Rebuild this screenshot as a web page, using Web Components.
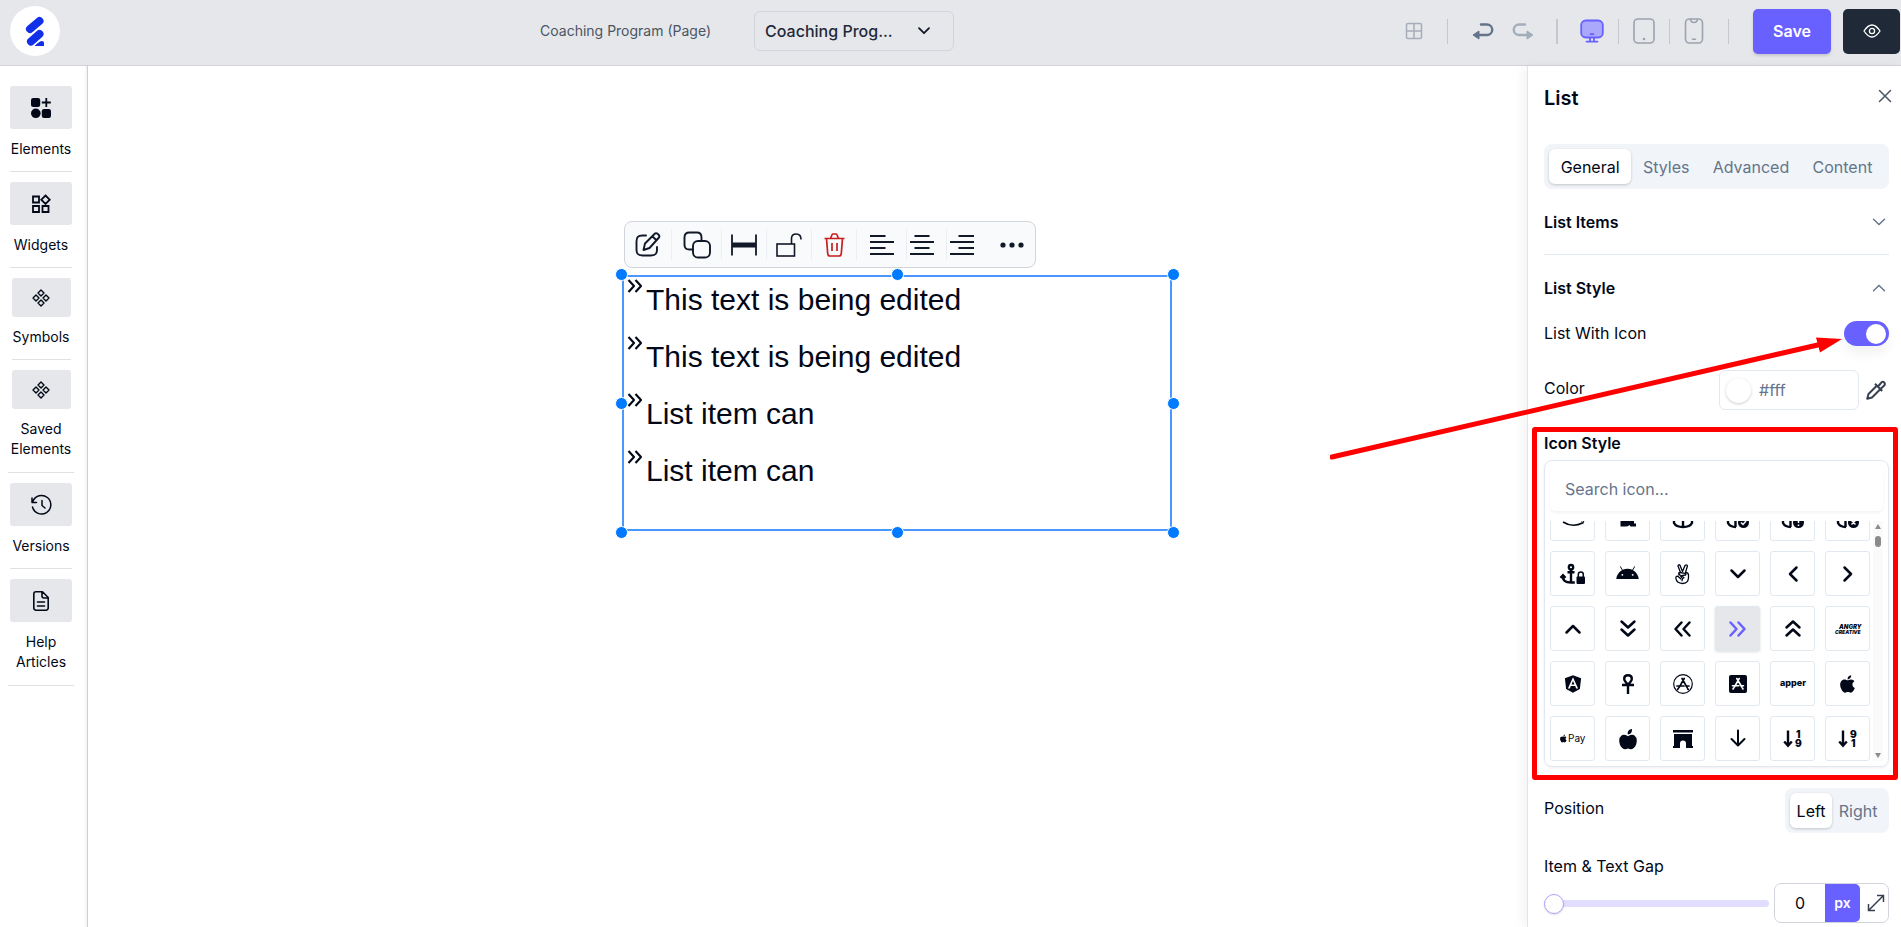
<!DOCTYPE html>
<html lang="en">
<head>
<meta charset="utf-8">
<title>Page editor</title>
<style>
  html, body { margin: 0; background: #fff; }
  body { font: 16px/24px Inter, "Liberation Sans", sans-serif; color: #020817; }
</style>
</head>
<body>
<editor-app></editor-app>
<script>
/* name: [width, height, viewBox, markup] */
const ICONS = {
  logo: [20, 31, '0 0 20 31', '<g fill="none" stroke="#1130e8" stroke-width="8" stroke-linecap="round"><path d="M5 13 14.500 5M6 25.500 14.500 18"/></g><path d="M9.500 30q5-5 7.500-5 2 0 2 2v3z" fill="#1130e8"/>'],
  frame: [18, 18, '0 0 18 18', '<g fill="none" stroke="#a7adb7" stroke-width="1.500"><rect x="1.500" y="1.500" width="15" height="15" rx="1.500"/><path d="M9 1.500v15M1.500 9h15"/></g>'],
  undo: [22, 18, '0 0 22 18', '<path d="M9 2.500h6a4.800 4.800 0 0 1 0 10.500H6" fill="none" stroke="#64748b" stroke-width="2.400" stroke-linecap="round"/><path d="M7 9v8L1 13z" fill="#64748b" stroke="#64748b" stroke-linejoin="round"/>'],
  redo: [22, 18, '0 0 22 18', '<path d="M13 2.500H7A4.800 4.800 0 0 0 7 13h9" fill="none" stroke="#a3adba" stroke-width="2.400" stroke-linecap="round"/><path d="M15 9v8l6-4z" fill="#a3adba" stroke="#a3adba" stroke-linejoin="round"/>'],
  desktop: [24, 24, '0 0 24 24', '<rect x="1.200" y="1.500" width="21.600" height="17" rx="4.500" fill="#aaa8fb" stroke="#6860ff" stroke-width="1.800"/><path d="M10.500 15.200h3M10 19v3.500M14 19v3.500M6.500 22.600h11" fill="none" stroke="#6860ff" stroke-width="1.800" stroke-linecap="round"/>'],
  tablet: [22, 26, '0 0 22 26', '<rect x="1" y="1" width="20" height="24" rx="4" fill="none" stroke="#9ca3af" stroke-width="1.600"/><circle cx="11" cy="21" r="1.300" fill="#9ca3af"/>'],
  phone: [20, 26, '0 0 20 26', '<rect x="1.500" y="1" width="17" height="24" rx="4" fill="none" stroke="#9ca3af" stroke-width="1.600"/><path d="M6.500 1.500c.5 4 6.500 4 7 0M8.500 21.200h3" fill="none" stroke="#9ca3af" stroke-width="1.600" stroke-linecap="round"/>'],
  eye: [18, 14, '0 0 18 14', '<path d="M1 7q8-12 16 0-8 12-16 0z" fill="none" stroke="#fff" stroke-width="1.300"/><circle cx="9" cy="7" r="2.600" fill="none" stroke="#fff" stroke-width="1.300"/>'],
  down: [12, 8, '0 0 12 8', '<path d="M1 1.200l5 5 5-5" fill="none" stroke="currentColor" stroke-width="1.800" stroke-linecap="round" stroke-linejoin="round"/>'],
  fold: [14, 8, '0 0 14 8', '<path d="M1.500 1.200 7 6.500l5.500-5.300" fill="none" stroke="currentColor" stroke-width="1.400" stroke-linecap="round"/>'],
  unfold: [14, 8, '0 0 14 8', '<path d="M1.500 6.800 7 1.500l5.500 5.300" fill="none" stroke="currentColor" stroke-width="1.400" stroke-linecap="round"/>'],
  close: [14, 14, '0 0 14 14', '<path d="M1.500 1.500l11 11m0-11-11 11" stroke="#4b5563" stroke-width="1.500" stroke-linecap="round"/>'],
  elements: [20, 20, '0 0 20 20', '<rect width="9.200" height="9" rx="2.200"/><rect x="10.800" y="11" width="9.200" height="9" rx="2.200"/><circle cx="4.800" cy="15.300" r="4.800"/><path d="M15.300 0v9M10.800 4.500h9" stroke="currentColor" stroke-width="1.800"/>'],
  widgets: [18, 18, '0 0 18 18', '<g fill="none" stroke="currentColor" stroke-width="1.800"><path d="M1 1.500h6v6H1zM1 11h6v6H1zM10.500 11h6v6h-6zM13.500.5l4.200 4.200-4.200 4.200-4.200-4.200z"/></g>'],
  symbols: [18, 18, '0 0 18 18', '<g fill="none" stroke="currentColor" stroke-width="1.400" stroke-linejoin="round"><path d="M9 1l3 3-3 3-3-3zM9 11l3 3-3 3-3-3zM4 6l3 3-3 3-3-3zM14 6l3 3-3 3-3-3z"/></g>'],
  history: [21, 20, '0 0 21 20', '<g fill="none" stroke="currentColor" stroke-width="1.500" stroke-linecap="round" stroke-linejoin="round"><path d="M1.800 6.500A9.300 9.300 0 1 1 1.500 12M1 3v4.500h4.500M11 5.500v5l3 2.500"/></g>'],
  doc: [16, 20, '0 0 16 20', '<g fill="none" stroke="currentColor" stroke-width="1.600" stroke-linejoin="round" stroke-linecap="round"><path d="M9.500.8H3A2.200 2.200 0 0 0 .8 3v14A2.200 2.200 0 0 0 3 19.200h10a2.200 2.200 0 0 0 2.200-2.200V6.500zM9 1v4a2 2 0 0 0 2 2h4M4.500 11h7M4.500 15h7"/></g>'],
  edit: [26, 25, '0 0 26 25', '<g fill="none" stroke="#111827" stroke-width="1.900" stroke-linecap="round" stroke-linejoin="round"><path d="M11 3.500H7.500C3 3.500 1.500 5 1.500 9.500v8c0 4.500 1.500 6 6 6H16c4.500 0 6-1.500 6-6V15"/><path d="M20 1.500c1.500-1.200 5.500 2 4 4L14.500 16 8.500 18l1.500-6.500zM17.500 4.500l4 3.800"/></g>'],
  copy: [28, 28, '0 0 28 28', '<g fill="none" stroke="#111827" stroke-width="1.900"><path d="M10 18.500H6.500Q1.500 18.500 1.500 14V6.500Q1.500 1.500 6.500 1.500H14Q18.500 1.500 18.500 6.500V9.500"/><rect x="10" y="10" width="17" height="16.500" rx="5"/></g>'],
  width: [26, 22, '0 0 26 22', '<path d="M1 .500v21M25 .500v21" stroke="#111827" stroke-width="1.800"/><path d="M1 11h24" stroke="#111827" stroke-width="5"/>'],
  unlock: [26, 24, '0 0 26 24', '<g fill="none" stroke="#111827" stroke-width="1.600"><rect x="1" y="11" width="17.500" height="12"/><path d="M15.500 11V5.500q0-4.500 4.800-4.500 4.700 0 4.700 5.500"/></g>'],
  trash: [21, 24, '0 0 21 24', '<g fill="none" stroke="#c81e1e" stroke-width="1.700" stroke-linejoin="round"><path d="M.500 5.500h20M2.500 5.500l1.200 15q.3 2.500 2.300 2.500h9q2 0 2.300-2.500l1.200-15M6.500 5.500 8 1.800q.3-.8 1-.8h3q.7 0 1 .8l1.500 3.700M8 10v8M13 10v8"/></g>'],
  alignleft: [24, 22, '0 0 24 22', '<path d="M0 2h15.500M0 8h24M0 14h15.500M0 20h24" stroke="#111827" stroke-width="2"/>'],
  aligncenter: [24, 22, '0 0 24 22', '<path d="M4.500 2h15M0 8h24M4.500 14h15M0 20h24" stroke="#111827" stroke-width="2"/>'],
  alignright: [24, 22, '0 0 24 22', '<path d="M8.500 2H24M0 8h24M8.500 14H24M0 20h24" stroke="#111827" stroke-width="2"/>'],
  dots: [24, 6, '0 0 24 6', '<g fill="#111827"><circle cx="3" cy="3" r="2.600"/><circle cx="12" cy="3" r="2.600"/><circle cx="21" cy="3" r="2.600"/></g>'],
  bullet: [16, 14, '0 0 16 14', '<path d="M1.500 1l5.500 6-5.500 6M8.500 1l5.500 6-5.500 6" fill="none" stroke="currentColor" stroke-width="2.100" stroke-linejoin="round"/>'],
  dropper: [20, 20, '0 0 20 20', '<g fill="none" stroke="#374151" stroke-width="2" stroke-linejoin="round"><path d="M11 5.500 2.500 14l-1.300 4.800L6 17.500 14.500 9M9 3.800l7.200 7.200M12 6.500l3-3.500c2-3 5.500.5 3 2.800l-3.500 3.200"/></g>'],
  expand: [18, 18, '0 0 18 18', '<path d="M2 16 16 2M10 1.500h6.500V8M1.500 10v6.500H8" fill="none" stroke="#374151" stroke-width="1.500"/>'],
  /* picker glyphs */
  amazonpay: [24, 20, '0 0 24 20', '<path d="M2 13q9.500 6 20 .800" fill="none" stroke="currentColor" stroke-width="1.600"/><path d="M20 12l3-.3-1.200 3" fill="none" stroke="currentColor"/><path d="M7 2v7h6V3"  fill="none" stroke="currentColor"/>'],
  amilia: [18, 20, '0 0 18 20', '<path d="M1.500 17.500V12q0-3 3-3h5V6H3V3h8q4 0 4 4v7.500h2v3h-5.500L10.500 16q-1.500 1.500-4 1.500z"/>'],
  anchor: [22, 20, '0 0 22 20', '<circle cx="11" cy="3" r="2" fill="none" stroke="currentColor" stroke-width="2"/><path d="M11 5v13M7 8h8M2 11.500v2.500q2 4 9 4t9-4v-2.500" fill="none" stroke="currentColor" stroke-width="2.400"/>'],
  anchorcheck: [25, 20, '0 0 25 20', '<path d="M10.500 5v13M7 8h7M3 10.500V14q2 4 8 4" fill="none" stroke="currentColor" stroke-width="2.400"/><circle cx="18.500" cy="13.500" r="5.500"/><path d="M16 13.500l2 2 3-3.500" fill="none" stroke="#fff" stroke-width="1.400"/>'],
  anchoralert: [25, 20, '0 0 25 20', '<path d="M10.500 5v13M7 8h7M3 10.500V14q2 4 8 4" fill="none" stroke="currentColor" stroke-width="2.400"/><circle cx="18.500" cy="13.500" r="5.500"/><path d="M18.500 10v4M18.500 15.500V17" stroke="#fff" stroke-width="1.500"/>'],
  anchorx: [25, 20, '0 0 25 20', '<path d="M10.500 5v13M7 8h7M3 10.500V14q2 4 8 4" fill="none" stroke="currentColor" stroke-width="2.400"/><circle cx="18.500" cy="13.500" r="5.500"/><path d="M16.500 11.500l4 4m0-4-4 4" stroke="#fff" stroke-width="1.400"/>'],
  anchorlock: [25, 20, '0 0 25 20', '<circle cx="11" cy="3.200" r="2.200" fill="none" stroke="currentColor" stroke-width="2.300"/><path d="M11 5v13.500M7.500 8.200h7M2.800 12.500q.2 6 8 6h4M.500 13.800l2.500-2.500 2.500 2.500" fill="none" stroke="currentColor" stroke-width="2.400"/><rect x="16.500" y="12.500" width="8.500" height="7.500" rx="1"/><path d="M18.300 13v-2.500q0-2.500 2.500-2.500t2.500 2.500V13" fill="none" stroke="currentColor" stroke-width="1.500"/>'],
  android: [23, 20, '0 0 576 512', '<path d="M420.550,301.930a24,24,0,1,1,24-24,24,24,0,0,1-24,24m-265.100,0a24,24,0,1,1,24-24,24,24,0,0,1-24,24m273.700-144.480,47.940-83a10,10,0,1,0-17.270-10h0l-48.540,84.070a301.250,301.250,0,0,0-246.560,0L116.180,64.450a10,10,0,1,0-17.270,10h0l47.940,83C64.530,202.220,8.240,285.550,0,384H576c-8.240-98.450-64.540-181.780-146.850-226.550"/>'],
  peace: [15, 20, '0 0 15 20', '<g fill="none" stroke="currentColor" stroke-width="1.300" stroke-linejoin="round" stroke-linecap="round"><path d="M5.500 8.500 3 2Q3.500 0 5 1.200L7.500 7.500 10 1.500q1.500-1.500 2.500.3L10.500 8.500q3 .3 3 2.500v3q-.5 5.500-6 5.500Q1.500 19.300.800 14q.2-2 2-1.800L6 15"/><path d="M4 11q-1-2.500 1-2.500l5 .800q1.500.700.500 1.700l-4 .700 2.500 2q-2 .5-2 3M4 9.500 6.500 13.500"/></g>'],
  angledown: [16, 10, '0 0 16 10', '<path d="M1.500 1.500 8 8l6.500-6.500"/>'],
  angleleft: [10, 16, '0 0 10 16', '<path d="M8.500 1.500 2 8l6.500 6.500"/>'],
  angleright: [10, 16, '0 0 10 16', '<path d="M1.500 1.500 8 8l-6.500 6.500"/>'],
  angleup: [16, 10, '0 0 16 10', '<path d="M1.500 8.500 8 2l6.500 6.500"/>'],
  anglesdown: [16, 17, '0 0 16 17', '<path d="M1.500 1.500 8 7.500l6.500-6M1.500 9.500l6.500 6 6.500-6"/>'],
  anglesup: [16, 17, '0 0 16 17', '<path d="M1.500 7.500 8 1.500l6.500 6M1.500 15.500l6.500-6 6.500 6"/>'],
  anglesleft: [17, 16, '0 0 17 16', '<path d="M7.500 1.500 1.500 8l6 6.500M15.500 1.500 9.500 8l6 6.500"/>'],
  anglesright: [17, 16, '0 0 17 16', '<path d="M1.500 1.500 7.500 8l-6 6.500M9.500 1.500l6 6.500-6 6.500"/>'],
  angry: [26, 12, '0 0 26 12', '<g font-family="Inter, sans-serif" font-weight="900" font-style="italic"><text x="4" y="6" font-size="6">ANGRY</text><text x="0" y="11" font-size="5">CREATIVE</text></g>'],
  angular: [18, 20, '0 0 448 512', '<path d="M185.700 268.100h76.200l-38.100-91.600-38.100 91.600zM223.800 32L16 106.400l31.800 275.700 176 97.900 176-97.900 31.800-275.700L223.800 32zM354 373.800h-48.600l-26.200-65.400H168.600l-26.200 65.400H93.700L223.800 81.500 354 373.800z"/>'],
  ankh: [14, 20, '0 0 14 20', '<path d="M7 10.500Q3.200 7 3.200 4.700 3.200 1.300 7 1.300t3.800 3.400Q10.800 7 7 10.500zM1 11h12M7 11v9" fill="none" stroke="currentColor" stroke-width="2.400"/>'],
  appstore: [20, 20, '0 0 20 20', '<circle cx="10" cy="10" r="9.300" fill="none" stroke="currentColor" stroke-width="1.200"/><path d="M11.200 4.500 6 13.700M9 4.500l5.200 9.200M4 12h7M13 12h3M5.200 14.500l-.6 1M14.600 14.500l.6 1" stroke="currentColor" stroke-width="1.700" stroke-linecap="round"/>'],
  appstorebox: [18, 18, '0 0 18 18', '<rect width="18" height="18" rx="2"/><path d="M10.200 3.500 5.400 12M7.800 3.500l5 8.500M3.500 10.800h6.300M12 10.800h2.500M4.600 13l-.6 1M13.400 13l.6 1" stroke="#fff" stroke-width="1.600" stroke-linecap="round"/>'],
  apper: [26, 12, '0 0 26 12', '<text x="0" y="8" font-family="Inter, sans-serif" font-weight="800" font-size="9">apper</text>'],
  apple: [15, 20, '0 0 384 512', '<path d="M318.700 268.700c-.2-36.700 16.400-64.400 50-84.800-18.800-26.900-47.200-41.700-84.700-44.600-35.500-2.800-74.300 20.700-88.500 20.700-15 0-49.400-19.700-76.400-19.700C63.300 141.200 4 184.800 4 273.500q0 39.300 14.400 81.200c12.800 36.700 59 126.700 107.200 125.200 25.200-.6 43-17.900 75.800-17.900 31.800 0 48.300 17.900 76.400 17.900 48.600-.7 90.400-82.500 102.600-119.300-65.200-30.700-61.700-90-61.700-91.900zm-56.600-164.200c27.300-32.400 24.800-61.900 24-72.500-24.100 1.400-52 16.400-67.900 34.900-17.500 19.800-27.800 44.300-25.600 71.900 26.100 2 49.900-11.400 69.500-34.300z"/>'],
  applepay: [26, 12, '0 0 26 12', '<g transform="translate(0 1) scale(.0175)"><path d="M318.700 268.700c-.2-36.700 16.400-64.400 50-84.800-18.800-26.900-47.200-41.700-84.700-44.600-35.500-2.800-74.300 20.700-88.500 20.700-15 0-49.400-19.700-76.400-19.700C63.300 141.200 4 184.800 4 273.500q0 39.300 14.400 81.200c12.800 36.700 59 126.700 107.200 125.200 25.200-.6 43-17.900 75.800-17.900 31.800 0 48.300 17.900 76.400 17.900 48.600-.7 90.400-82.500 102.600-119.300-65.200-30.700-61.700-90-61.700-91.900zm-56.600-164.200c27.300-32.400 24.800-61.900 24-72.500-24.100 1.400-52 16.400-67.900 34.900-17.500 19.800-27.800 44.300-25.600 71.900 26.100 2 49.900-11.400 69.500-34.300z"/></g><text x="8" y="9" font-family="Inter, sans-serif" font-size="10">Pay</text>'],
  applewhole: [18, 20, '0 0 18 20', '<path d="M9 7.300Q5 4.800 2.500 6.500 0 8.300.200 12q.5 6 4.500 8 2 .5 4.300-.5 2.300 1 4.300.5 4-2 4.500-8 .2-3.700-2.300-5.500Q13 4.800 9 7.300zM8.700 5.500Q8 .5 13 0q.5 5-4.300 5.500z"/>'],
  archway: [20, 18, '0 0 20 18', '<path d="M0 0h20v2.500H0zM1 4h18v12h1v2h-7v-4.500q0-3-3-3t-3 3V18H0v-2h1z"/>'],
  arrowdown: [16, 17, '0 0 16 17', '<path d="M8 .500v14.500M1.500 9 8 15.500 14.500 9" stroke-width="2"/>'],
  sort19: [20, 18, '0 0 20 18', '<path d="M5 .500v15M1.200 11.500 5 15.700l3.800-4.200" fill="none" stroke="currentColor" stroke-width="2.400"/><g font-family="Inter, sans-serif" font-weight="900" font-size="10"><text x="13" y="7.500">1</text><text x="12" y="17">9</text></g>'],
  sort91: [20, 18, '0 0 20 18', '<path d="M5 .500v15M1.200 11.500 5 15.700l3.800-4.200" fill="none" stroke="currentColor" stroke-width="2.400"/><g font-family="Inter, sans-serif" font-weight="900" font-size="10"><text x="12" y="7.500">9</text><text x="13" y="17">1</text></g>']
};
const STROKED = /^(angle(s)?(down|up|left|right)|arrowdown)$/;

const define = (name, html, setup) => customElements.define(name, class extends HTMLElement {
  connectedCallback() {
    if (this.shadowRoot) return;
    const root = this.attachShadow({ mode: 'open' });
    root.innerHTML = `<style>
      *, *::before { box-sizing: border-box; }
      button, input, select { font: inherit; color: inherit; margin: 0; padding: 0; border: 0; background: none; }
      button { display: flex; align-items: center; justify-content: center; cursor: pointer; }
    </style>` + (typeof html === 'function' ? html(this) : html);
    if (setup) setup(this, root);
  }
});

define('ui-icon', el => {
  const name = el.getAttribute('name');
  const [w, h, box, body] = ICONS[name];
  const stroke = STROKED.test(name) ? 'fill="none" stroke="currentColor" stroke-width="2.500" stroke-linecap="round" stroke-linejoin="round"' : 'fill="currentColor"';
  return `<style>:host { display: inline-flex; flex: none; } svg { display: block; overflow: visible; }</style>
    <svg width="${w}" height="${h}" viewBox="${box}" ${stroke} aria-hidden="true">${body}</svg>`;
});

define('top-bar', `
<style>
  :host { display: grid; grid-template-columns: 60px 478fr 414px 449fr auto; align-items: center; height: 66px; box-sizing: border-box;
    background: #e5e7eb; border-bottom: 1px solid #d1d5db; padding-bottom: 3px; }
  .logo { display: flex; align-items: center; justify-content: center; width: 50px; height: 50px; margin-left: 10px; border-radius: 50%; background: #fff; }
  .page { grid-column: 3; display: flex; align-items: center; justify-content: space-between; }
  .name { font-size: 14px; line-height: 20px; color: #4b5563; white-space: nowrap; }
  .pick { position: relative; width: 200px; }
  select { width: 100%; height: 40px; padding: 0 56px 0 10px; appearance: none; border: 1px solid #d1d5db; border-radius: 6px; font-weight: 500; color: #1f2937; }
  .pick ui-icon { position: absolute; right: 24px; top: 16px; color: #111827; pointer-events: none; }
  .tools { grid-column: 5; display: flex; align-items: center; padding-right: 1px; }
  .history { display: flex; gap: 18px; }
  i { width: 1px; height: 25px; margin: 0 24px; background: #c3c7ce; }
  i.near { margin: 0 14px; }
  i.bold { width: 2px; margin: 0 22px; }
  .save { width: 78px; height: 45px; margin-right: 12px; border-radius: 5px; background: #6860ff; color: #fff; font-weight: 600; box-shadow: 0 2px 3px #0002; }
  .view { width: 57px; height: 45px; border-radius: 5px; background: #1f2937; }
</style>
<a class="logo" href="#" aria-label="Home"><ui-icon name="logo"></ui-icon></a>
<div class="page">
  <span class="name">Coaching Program (Page)</span>
  <div class="pick"><select aria-label="Page"><option>Coaching Prog...</option></select><ui-icon name="down"></ui-icon></div>
</div>
<div class="tools">
  <button aria-label="Grid"><ui-icon name="frame"></ui-icon></button><i></i>
  <div class="history"><button aria-label="Undo"><ui-icon name="undo"></ui-icon></button><button aria-label="Redo"><ui-icon name="redo"></ui-icon></button></div><i class="bold"></i>
  <button aria-label="Desktop"><ui-icon name="desktop"></ui-icon></button><i class="near"></i>
  <button aria-label="Tablet"><ui-icon name="tablet"></ui-icon></button><i class="near"></i>
  <button aria-label="Phone"><ui-icon name="phone"></ui-icon></button><i></i>
  <button class="save">Save</button><button class="view" aria-label="Preview"><ui-icon name="eye"></ui-icon></button>
</div>`);

define('rail-item', el => `
<style>
  :host { display: block; width: 62px; padding-bottom: 12px; border-bottom: 1px solid #dfe1e5; text-align: center; font-size: 14px; line-height: 20px; }
  :host([compact]) { width: 59px; }
  :host([wide]) { width: 66px; padding-bottom: 13px; }
  button { width: 62px; height: 43px; margin: 0 auto 10px; border-radius: 3px; background: #e5e7eb; }
  :host([icon="symbols"]) button { width: 59px; height: 39px; }
  span { display: block; }
</style>
<button aria-labelledby="t"><ui-icon name="${el.getAttribute('icon')}"></ui-icon></button><span id="t"><slot></slot></span>`);

define('side-rail', `
<style>
  :host { display: flex; flex-direction: column; align-items: center; gap: 10px; box-sizing: border-box; padding: 20px 5px 20px 0;
    border-right: 1px solid #cfcfcf; box-shadow: inset -3px 0 3px -2px #0001; }
</style>
<rail-item icon="elements">Elements</rail-item>
<rail-item icon="widgets">Widgets</rail-item>
<rail-item icon="symbols" compact>Symbols</rail-item>
<rail-item icon="symbols" wide>Saved<br>Elements</rail-item>
<rail-item icon="history">Versions</rail-item>
<rail-item icon="doc" wide>Help<br>Articles</rail-item>`);

define('block-toolbar', `
<style>
  :host { display: grid; grid-template-columns: 46px 50px 45px 45px 45px 50px 40px 40px 51px; box-sizing: border-box; width: 412px; height: 47px; padding: 7px 0;
    border: 1px solid #d1d5db; border-radius: 8px; background: #f8fafc; }
  button + button { border-left: 1px solid #eceef1; }
  button.shift { justify-content: flex-start; padding-left: 3px; }
  button:last-child { border-left: 0; }
</style>
<button aria-label="Edit"><ui-icon name="edit"></ui-icon></button>
<button aria-label="Duplicate"><ui-icon name="copy"></ui-icon></button>
<button aria-label="Width"><ui-icon name="width"></ui-icon></button>
<button aria-label="Unlock"><ui-icon name="unlock"></ui-icon></button>
<button aria-label="Delete"><ui-icon name="trash"></ui-icon></button>
<button aria-label="Align left"><ui-icon name="alignleft"></ui-icon></button>
<button class="shift" aria-label="Align center"><ui-icon name="aligncenter"></ui-icon></button>
<button class="shift" aria-label="Align right"><ui-icon name="alignright"></ui-icon></button>
<button aria-label="More"><ui-icon name="dots"></ui-icon></button>`);

define('list-block', `
<style>
  :host { display: block; position: relative; border: 2px solid #4a98ff; padding: 0 3px 36px; }
  ul { list-style: none; margin: 0; padding: 0; display: grid; gap: 12px; }
  li { display: flex; gap: 3px; font: 30px/45px "Liberation Sans", Arial, sans-serif; color: #020817; }
  li ui-icon { align-self: flex-start; padding-top: 2px; }
  .handles { position: absolute; inset: -3px; pointer-events: none; }
  b { position: absolute; width: 13px; height: 13px; margin: -6px; border: 1px solid #fff; border-radius: 50%; background: #007bff; }
</style>
<ul>${['This text is being edited', 'This text is being edited', 'List item can', 'List item can'].map(t => `<li><ui-icon name="bullet"></ui-icon><span>${t}</span></li>`).join('')}</ul>
<div class="handles">${[[0, 0], [50, 0], [100, 0], [0, 50], [100, 50], [0, 100], [50, 100], [100, 100]].map(([x, y]) => `<b style="left:${x}%;top:${y}%"></b>`).join('')}</div>`);

define('page-canvas', `
<style>
  :host { display: grid; grid-template-columns: 534fr 550fr 355fr; align-content: start; padding-top: 155px; min-width: 0; }
  .stack { grid-column: 2; display: grid; gap: 7px; }
  block-toolbar { margin-left: 2px; }
</style>
<div class="stack"><block-toolbar></block-toolbar><list-block></list-block></div>`);

define('segment-tabs', el => `
<style>
  :host { display: flex; box-sizing: border-box; height: 45px; padding: 5px; border-radius: 8px; background: #f1f5f9; }
  button { flex: 1 1 auto; padding: 0 9px; border-radius: 6px; color: #64748b; }
  :host([tight]) button { padding: 0 5px; }
  button[aria-pressed="true"] { background: #fff; color: #020817; box-shadow: 0 1px 3px #0003; }
</style>
${el.getAttribute('items').split(',').map((t, i) => `<button aria-pressed="${i === 0}">${t}</button>`).join('')}`);

define('panel-heading', el => `
<style>
  :host { display: block; }
  button { width: 100%; height: 65px; justify-content: space-between; padding: 0 3px 0 0; font-weight: 600; }
  ui-icon { color: #64748b; }
</style>
<button aria-expanded="${el.hasAttribute('open')}"><slot></slot><ui-icon name="${el.hasAttribute('open') ? 'unfold' : 'fold'}"></ui-icon></button>`);

const PICKS = 'amazonpay amilia anchor anchorcheck anchoralert anchorx anchorlock android peace angledown angleleft angleright angleup anglesdown anglesleft anglesright anglesup angry angular ankh appstore appstorebox apper apple applepay applewhole archway arrowdown sort19 sort91'.split(' ');

define('icon-picker', `
<style>
  :host { display: block; box-sizing: border-box; padding: 5px; border: 1px solid #e2e8f0; border-radius: 8px; box-shadow: 0 1px 3px #0001; }
  input { display: block; width: 100%; height: 45px; padding: 0 15px; border-radius: 6px; box-shadow: 0 2px 3px #0000000d; outline: 0; }
  input::placeholder { color: #64748b; opacity: 1; }
  .view { display: flex; justify-content: space-between; margin-top: 10px; }
  .clip { display: flex; flex-direction: column; justify-content: flex-end; height: 240px; overflow: hidden; }
  .grid { display: grid; grid-template-columns: repeat(6, 45px); gap: 10px; }
  .grid button { height: 45px; border: 1px solid #e2e8f0; border-radius: 3px; }
  .grid button[aria-pressed="true"] { background: #e5e7eb; color: #6860ff; box-shadow: 0 1px 3px #0002; }
  .bar { display: flex; flex-direction: column; align-items: center; width: 10px; padding: 3px 0; background: #fafafa; }
  .up, .dn { border: 3px solid transparent; border-bottom: 5px solid #8b8b8b; border-top: 0; }
  .dn { border-top: 5px solid #8b8b8b; border-bottom: 0; margin-top: auto; }
  .thumb { width: 6px; height: 11px; margin-top: 7px; border-radius: 3px; background: #8b8b8b; }
</style>
<input type="text" placeholder="Search icon..." aria-label="Search icon">
<div class="view">
  <div class="clip"><div class="grid">${PICKS.map(n => `<button aria-label="${n}" aria-pressed="${n === 'anglesright'}"><ui-icon name="${n}"></ui-icon></button>`).join('')}</div></div>
  <div class="bar"><span class="up"></span><span class="thumb"></span><span class="dn"></span></div>
</div>`);

define('settings-panel', `
<style>
  :host { display: block; position: relative; box-sizing: border-box; padding: 16px 12px 4px 16px; background: #fff; border-left: 1px solid #e2e4ea; box-shadow: -4px 0 10px #0000000d; }
  header { display: flex; align-items: center; justify-content: space-between; height: 32px; margin: 0 -3px 30px 0; }
  header button { padding-bottom: 4px; }
  h2 { margin: 0; font-size: 20px; font-weight: 600; }
  panel-heading:first-of-type { border-bottom: 1px solid #e2e8f0; }
  .row { display: flex; justify-content: space-between; align-items: center; }
  .switch { position: relative; height: 26px; margin-top: 1px; align-items: flex-start; }
  .switch input { appearance: none; width: 45px; height: 25px; border-radius: 13px; background: #6860ff; box-shadow: 0 8px 12px #0000000d; }
  .switch input::before { content: ""; display: block; width: 20px; height: 20px; margin: 3px 0 0 22px; border-radius: 50%; background: #fff; }
  .arrow { position: absolute; right: 47px; top: 9px; z-index: 2; pointer-events: none; }
  .color { height: 40px; margin-top: 23px; padding-right: 3px; }
  .color label { align-self: flex-start; line-height: 36px; }
  .field { display: flex; align-items: center; gap: 8px; width: 140px; height: 40px; margin: 0 7px 0 auto; padding: 0 6px; border: 1px solid #e2e8f0; border-radius: 6px; }
  .field button { flex: none; width: 25px; height: 25px; border-radius: 50%; box-shadow: 0 1px 3px #0003; }
  .field input { min-width: 0; width: 100%; color: #64748b; }
  section { position: relative; margin-top: 21px; }
  h3 { margin: 0 0 5px; font-size: 16px; line-height: 24px; font-weight: 600; }
  .frame { position: absolute; inset: -4px -9px -13px -12px; border: 5px solid #f00; border-radius: 3px; pointer-events: none; }
  .position { margin-top: 21px; align-items: flex-start; line-height: 40px; }
  segment-tabs[tight] { line-height: 24px; width: 104px; }
  .gap { display: block; margin: 21px 0 5px; }
  .slider { gap: 5px; }
  input[type="range"] { appearance: none; flex: 1; min-width: 0; height: 20px; margin: 0; }
  input[type="range"]::-webkit-slider-runnable-track { height: 7px; border-radius: 4px; background: #e0ddff; }
  input[type="range"]::-webkit-slider-thumb { appearance: none; width: 20px; height: 20px; margin-top: -6px; border: 1px solid #aca7fb; border-radius: 50%; background: #fff; box-shadow: 0 1px 2px #0002; }
  .unit { display: grid; grid-template-columns: 50px 35px 1fr; width: 115px; height: 40px; border: 1px solid #d1d5db; border-radius: 7px; overflow: hidden; }
  .unit input { width: 100%; text-align: center; }
  .unit button:last-child { padding-left: 4px; }
  .unit .px { background: #6860ff; color: #fff; font-weight: 600; font-size: 14px; border-radius: 0 5px 5px 0; }
</style>
<header><h2>List</h2><button aria-label="Close"><ui-icon name="close"></ui-icon></button></header>
<segment-tabs items="General,Styles,Advanced,Content"></segment-tabs>
<panel-heading>List Items</panel-heading>
<panel-heading open>List Style</panel-heading>
<div class="row switch">
  <label for="with-icon">List With Icon</label><input id="with-icon" type="checkbox" role="switch" checked>
  <svg class="arrow" width="512" height="130" viewBox="0 0 512 130" aria-hidden="true"><path d="M2 127 492 14" stroke="#f00" stroke-width="5" stroke-linecap="round"/><path d="M486 7.500 512 9l-22 13.500z" fill="#f00"/></svg>
</div>
<div class="row color">
  <label for="color">Color</label>
  <div class="field"><button aria-label="Pick color"></button><input id="color" type="text" value="#fff"></div>
  <button aria-label="Eyedropper"><ui-icon name="dropper"></ui-icon></button>
</div>
<section><h3>Icon Style</h3><icon-picker></icon-picker><div class="frame"></div></section>
<div class="row position"><span>Position</span><segment-tabs tight items="Left,Right"></segment-tabs></div>
<label class="gap" for="gap">Item &amp; Text Gap</label>
<div class="row slider">
  <input id="gap" type="range" min="0" max="100" value="0">
  <div class="unit"><input type="text" value="0" aria-label="Gap value"><button class="px">px</button><button aria-label="Expand"><ui-icon name="expand"></ui-icon></button></div>
</div>`);

define('editor-app', `
<style>
  :host { display: flex; flex-direction: column; min-height: 100vh; }
  main { flex: 1; display: grid; grid-template-columns: 88px minmax(0, 1fr) 374px; }
</style>
<top-bar></top-bar>
<main><side-rail></side-rail><page-canvas></page-canvas><settings-panel></settings-panel></main>`);
</script>
</body>
</html>
